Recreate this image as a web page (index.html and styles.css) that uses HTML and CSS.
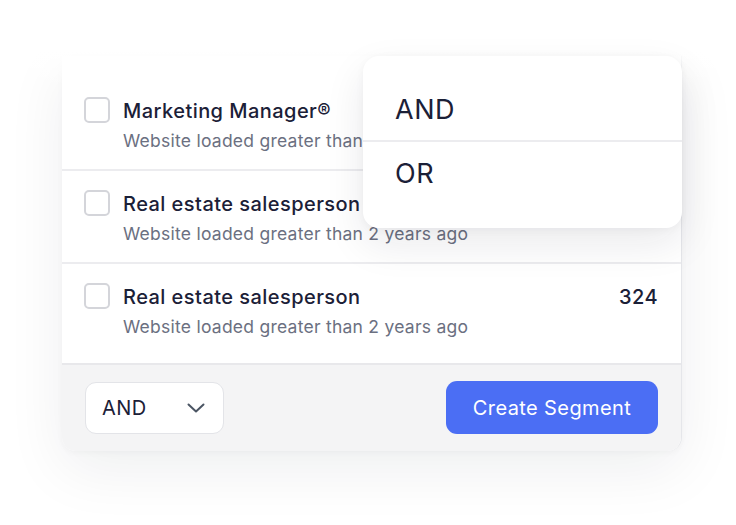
FILE: index.html
```html
<!DOCTYPE html>
<html>
<head>
<meta charset="utf-8">
<link rel="stylesheet" href="styles.css">
</head>
<body>
<div class="stage">
  <div class="card">
    <div class="fade"></div>
    <div class="row first">
      <span class="check"></span>
      <div class="text">
        <div class="title">Marketing Manager®</div>
        <div class="sub">Website loaded greater than 2 years ago</div>
      </div>
    </div>
    <div class="row">
      <span class="check"></span>
      <div class="text">
        <div class="title">Real estate salesperson</div>
        <div class="sub">Website loaded greater than 2 years ago</div>
      </div>
    </div>
    <div class="row last">
      <span class="check"></span>
      <div class="text">
        <div class="title">Real estate salesperson</div>
        <div class="sub">Website loaded greater than 2 years ago</div>
      </div>
      <div class="count">324</div>
    </div>
    <div class="footer">
      <div class="select">
        <span>AND</span>
        <svg width="18" height="10" viewBox="0 0 18 10"><path d="M1.5 1.5 L9 8.5 L16.5 1.5" fill="none" stroke="#4b5563" stroke-width="2" stroke-linecap="round" stroke-linejoin="round"/></svg>
      </div>
      <button class="btn">Create Segment</button>
    </div>
  </div>
  <div class="menu">
    <div class="item">AND</div>
    <div class="item second">OR</div>
  </div>
</div>
</body>
</html>
```
FILE: styles.css
```css
html, body {
  margin: 0;
  padding: 0;
  background: #ffffff;
  font-family: Inter, "Noto Sans", sans-serif;
}
.stage {
  position: relative;
  width: 736px;
  height: 525px;
  overflow: hidden;
}
.card {
  position: relative;
  margin: 56px 0 0 62px;
  width: 619px;
  background: #ffffff;
  border-right: 1px solid #e5e6ea;
  border-radius: 0 0 14px 14px;
  box-shadow: 0 18px 60px rgba(20, 24, 40, 0.07), 0 2px 6px rgba(20, 24, 40, 0.03);
}
.fade {
  position: absolute;
  left: -40px;
  right: -40px;
  top: -60px;
  height: 90px;
  background: linear-gradient(to bottom, #ffffff 60%, rgba(255,255,255,0));
  z-index: 2;
  pointer-events: none;
}
.row {
  display: flex;
  align-items: flex-start;
  padding: 21px 23px 17px 22px;
  border-bottom: 2px solid #ececef;
  gap: 13px;
}
.row.first {
  padding-top: 43px;
}
.row.last {
  padding-bottom: 25px;
  border-bottom-color: #e8e8eb;
}
.check {
  flex: none;
  width: 22px;
  height: 22px;
  margin-top: -2px;
  border: 2px solid #d4d5da;
  border-radius: 5px;
  background: #fff;
}
.text {
  flex: 1;
}
.title {
  font-size: 20px;
  font-weight: 450;
  line-height: 24px;
  letter-spacing: 0.45px;
  color: #1b2037;
}
.sub {
  margin-top: 7px;
  font-size: 17.5px;
  line-height: 22px;
  letter-spacing: 0.25px;
  color: #6b7081;
  white-space: nowrap;
}
.count {
  font-size: 20px;
  font-weight: 450;
  line-height: 24px;
  letter-spacing: 0.45px;
  color: #1b2037;
}
.footer {
  display: flex;
  justify-content: space-between;
  align-items: center;
  background: #f4f4f5;
  padding: 16px 23px 17px 23px;
  border-radius: 0 0 14px 14px;
}
.select {
  display: flex;
  align-items: center;
  justify-content: space-between;
  width: 139px;
  height: 52px;
  box-sizing: border-box;
  padding: 0 18px 0 16px;
  background: #fff;
  border: 1px solid #e3e4e8;
  border-radius: 11px;
  font-size: 20px;
  letter-spacing: 0.5px;
  color: #1b2037;
}
.btn {
  width: 212px;
  height: 53px;
  border: none;
  border-radius: 11px;
  background: #4b6ef4;
  color: #ffffff;
  font-family: Inter, "Noto Sans", sans-serif;
  font-size: 20px;
  font-weight: 400;
  letter-spacing: 0.4px;
}
.menu {
  position: absolute;
  left: 363px;
  top: 56px;
  width: 319px;
  box-sizing: border-box;
  padding: 23px 0 22px;
  background: #ffffff;
  border-radius: 16px;
  box-shadow: 0 16px 40px rgba(20, 24, 40, 0.09), 0 2px 8px rgba(20, 24, 40, 0.04);
  z-index: 3;
}
.item {
  font-size: 27px;
  line-height: 61px;
  letter-spacing: 0.5px;
  color: #1b2037;
  padding-left: 32px;
}
.item.second {
  line-height: 64px;
  border-top: 2px solid #ececef;
}
```
